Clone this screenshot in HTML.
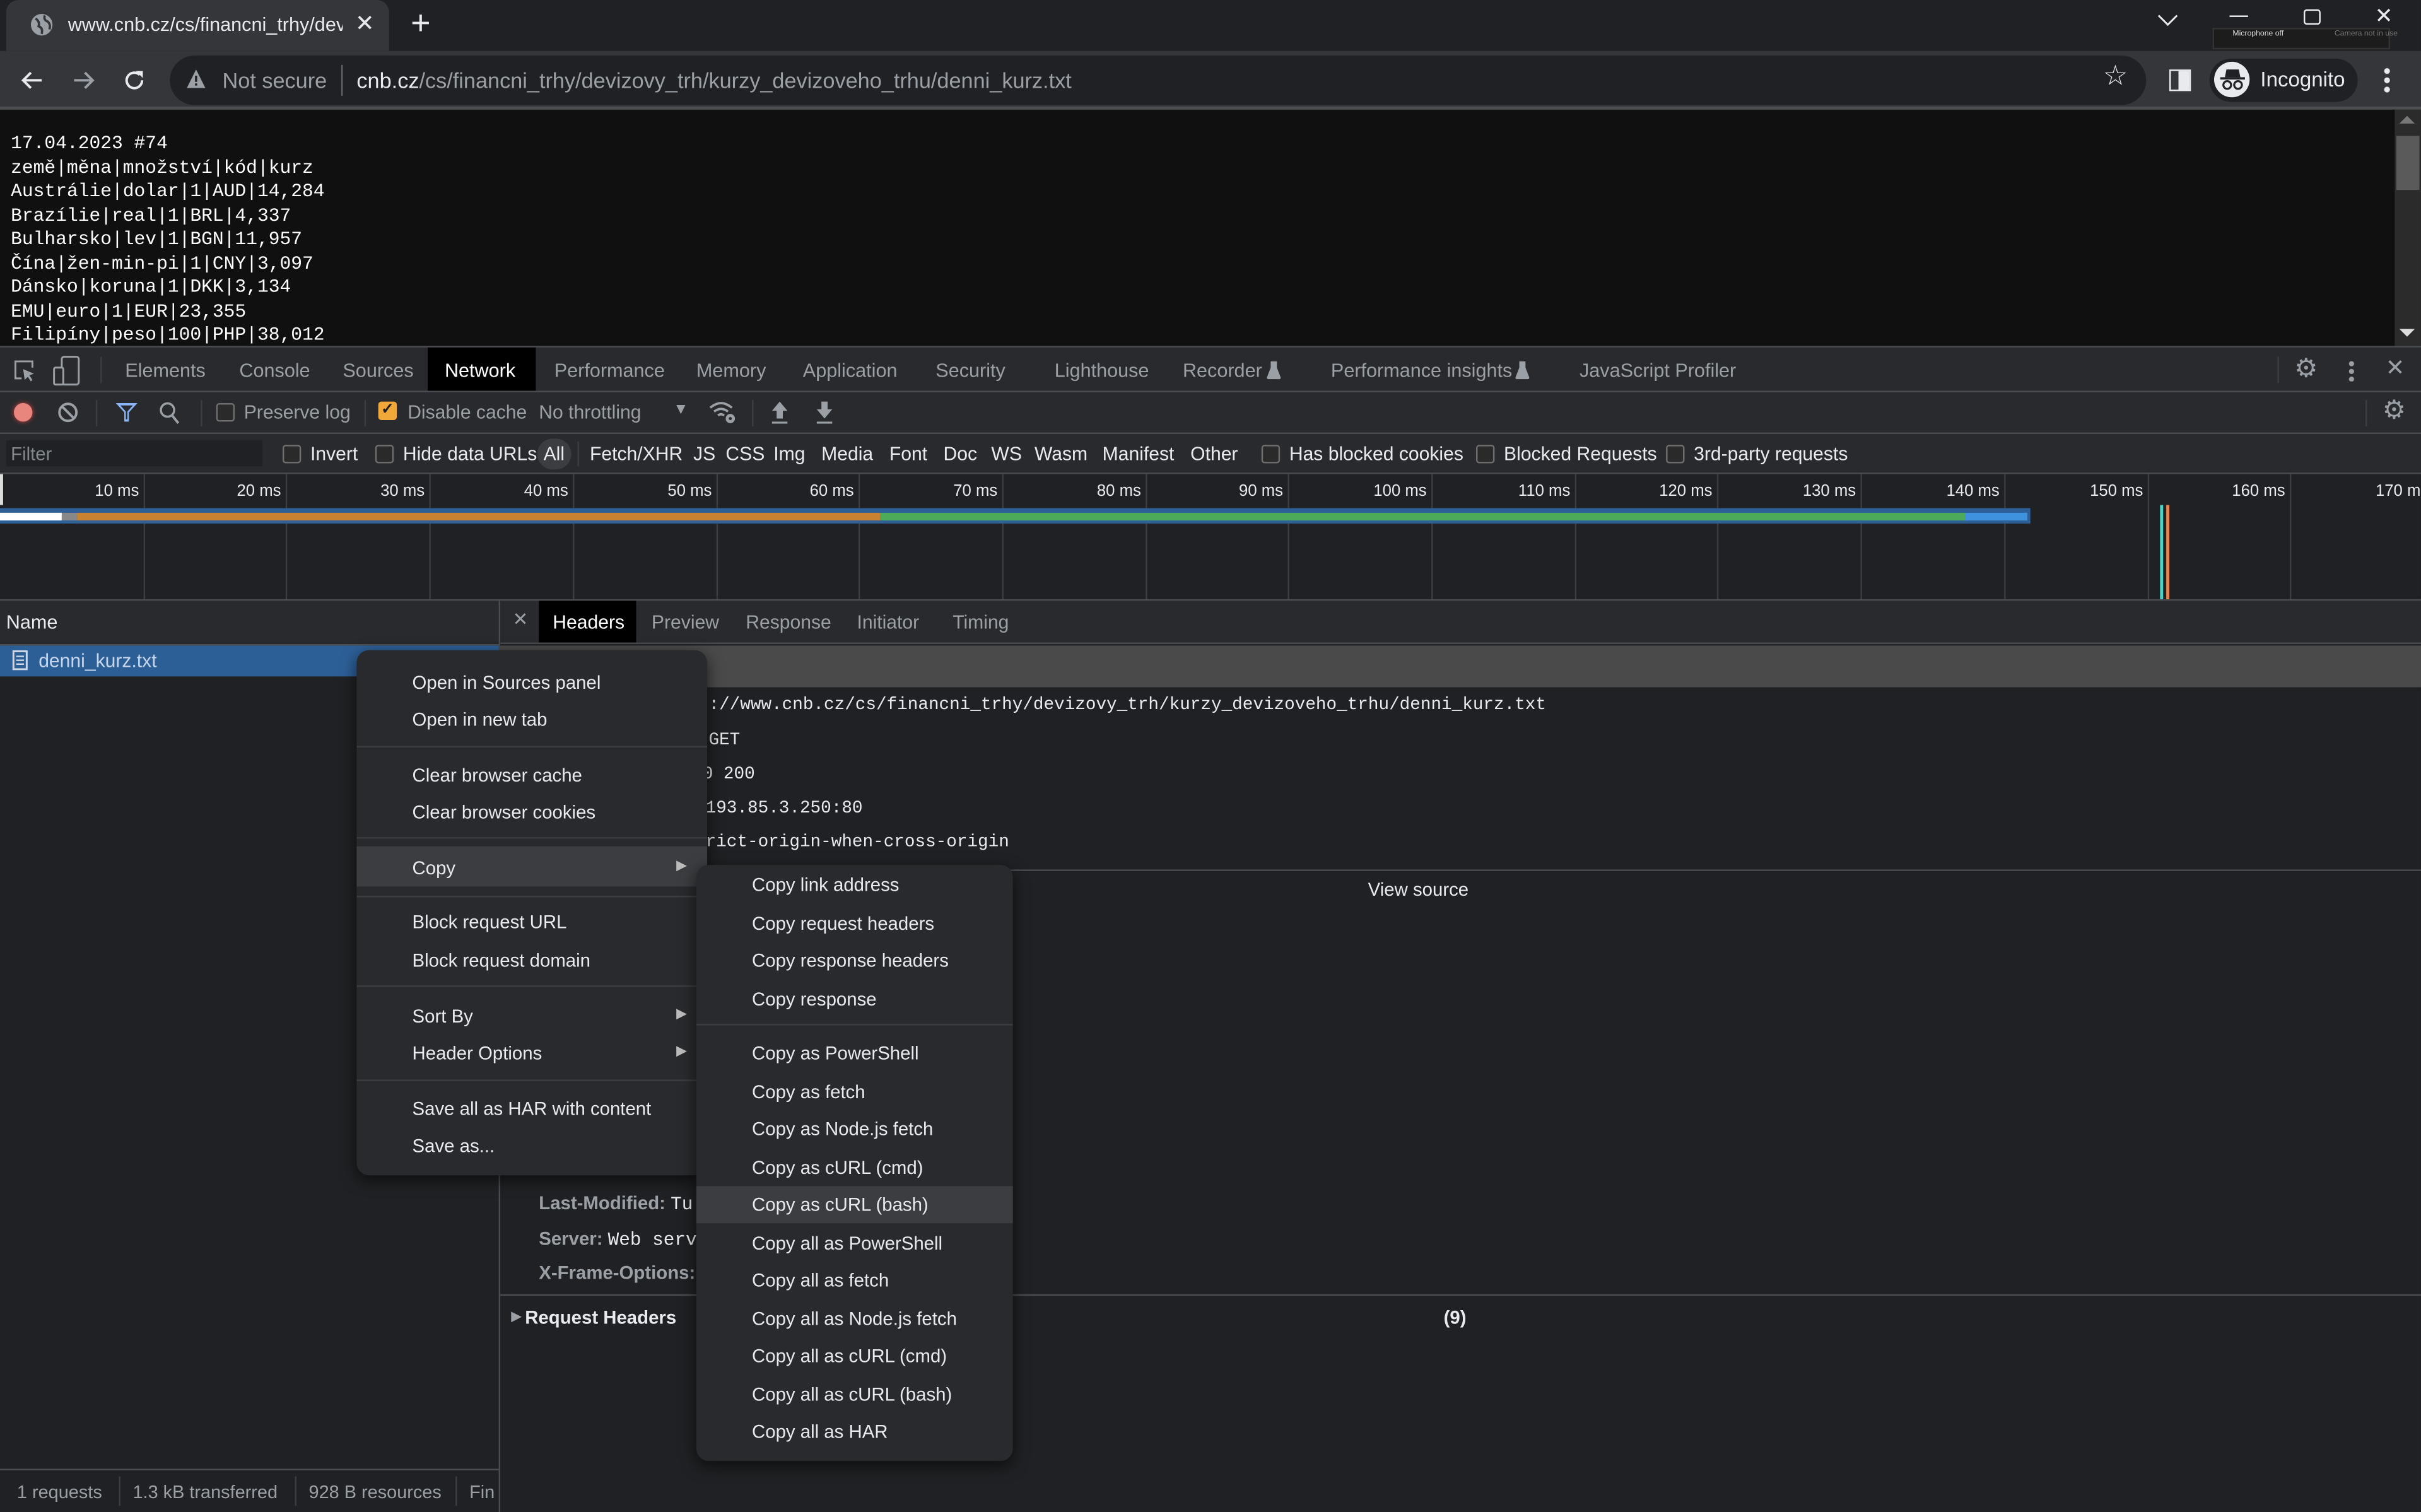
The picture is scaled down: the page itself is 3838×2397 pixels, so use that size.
<!DOCTYPE html>
<html><head><meta charset="utf-8">
<style>
html,body{margin:0;padding:0;background:#202124;overflow:hidden}
#root{position:absolute;left:0;top:0;width:1568px;height:979px;transform:scale(2.4477,2.4484);transform-origin:0 0;background:#202124;font-family:"Liberation Sans",sans-serif;font-size:12px;color:#e8eaed;overflow:hidden}
.a{position:absolute;white-space:nowrap}
.mono{font-family:"Liberation Mono",monospace}
.g{color:#9aa0a6}
.vl{position:absolute;width:1px;background:#3c3d41}
.cb{position:absolute;width:10px;height:10px;border:1px solid #6e6e6e;border-radius:2px;background:#2a2a2a}
.tab{position:absolute;top:233px;color:#9aa0a6;font-size:12.5px}
.mi{position:absolute;left:36px;font-size:12px;color:#e8eaed}
.si{position:absolute;left:36px;font-size:12px;color:#e8eaed}
.sep{position:absolute;left:0;right:0;height:1px;background:#3c3d41}
.ft{position:absolute;top:287px;font-size:12.3px}
</style></head><body><div id="root">
<!-- tab strip -->
<div class="a" style="left:0;top:0;width:1568px;height:33px;background:#202124"></div>
<div class="a" style="left:4px;top:0;width:248px;height:33px;background:#35363a;border-radius:8px 8px 0 0"></div>
<svg class="a" style="left:19px;top:8px" width="16" height="16" viewBox="0 0 16 16"><circle cx="8" cy="8" r="7" fill="#9aa0a6"/><path d="M4 4 Q7 6 6 9 Q9 10 8 14 M10 2 Q9 5 12 6 Q14 8 13 11" stroke="#35363a" stroke-width="1.5" fill="none"/></svg>
<div class="a" style="left:44px;top:9px;font-size:12.5px;width:178px;overflow:hidden">www.cnb.cz/cs/financni_trhy/devizovy</div>
<div class="a" style="left:230px;top:6px;font-size:15px">✕</div>
<div class="a" style="left:266px;top:2px;font-size:22px;font-weight:300">+</div>
<svg class="a" style="left:1397px;top:8px" width="14" height="10"><path d="M1 2 L7 8 L13 2" stroke="#e8eaed" fill="none" stroke-width="1.2"/></svg>
<div class="a" style="left:1444px;top:10px;width:12px;height:1px;background:#e8eaed"></div>
<div class="a" style="left:1492px;top:6px;width:9px;height:8px;border:1px solid #e8eaed;border-radius:2px"></div>
<div class="a" style="left:1538px;top:2px;font-size:14px">✕</div>
<div class="a" style="left:1433px;top:18px;width:113px;height:12px;background:#1c1c1c;border:1px solid #333"></div>
<div class="a" style="left:1446px;top:19px;font-size:5px;color:#ddd">Microphone off</div>
<div class="a" style="left:1512px;top:19px;font-size:5px;color:#777">Camera not in use</div>
<!-- toolbar -->
<div class="a" style="left:0;top:33px;width:1568px;height:37px;background:#35363a"></div>
<div class="a" style="left:0;top:69px;width:1568px;height:2px;background:#4d4e52"></div>
<svg class="a" style="left:12px;top:43px" width="18" height="18" viewBox="0 0 18 18"><path d="M15 9 H3 M8 4 L3 9 L8 14" stroke="#e8eaed" stroke-width="1.6" fill="none"/></svg>
<svg class="a" style="left:45px;top:43px" width="18" height="18" viewBox="0 0 18 18"><path d="M3 9 H15 M10 4 L15 9 L10 14" stroke="#9aa0a6" stroke-width="1.6" fill="none"/></svg>
<svg class="a" style="left:78px;top:43px" width="18" height="18" viewBox="0 0 18 18"><path d="M14 9 A5 5 0 1 1 12.5 5.5" stroke="#e8eaed" stroke-width="1.6" fill="none"/><path d="M10 3 H14.5 V7.5 Z" fill="#e8eaed"/></svg>
<div class="a" style="left:110px;top:36px;width:1280px;height:32px;background:#202124;border-radius:16px"></div>
<svg class="a" style="left:120px;top:44px" width="14" height="14" viewBox="0 0 14 14"><path d="M7 1 L13 13 H1 Z" fill="#9aa0a6"/><rect x="6.3" y="5" width="1.4" height="4" fill="#202124"/><rect x="6.3" y="10" width="1.4" height="1.4" fill="#202124"/></svg>
<div class="a g" style="left:144px;top:44px;font-size:14px">Not secure</div>
<div class="a" style="left:221px;top:42px;width:1px;height:20px;background:#5f6368"></div>
<div class="a" style="left:231px;top:44px;font-size:14px"><span style="color:#e8eaed">cnb.cz</span><span class="g">/cs/financni_trhy/devizovy_trh/kurzy_devizoveho_trhu/denni_kurz.txt</span></div>
<div class="a" style="left:1362px;top:39px;font-size:18px;color:#e8eaed">☆</div>
<div class="a" style="left:1405px;top:45px;width:12px;height:12px;border:1px solid #e8eaed;background:linear-gradient(90deg,#35363a 0 5px,#e8eaed 5px)"></div>
<div class="a" style="left:1431px;top:38px;width:96px;height:28px;background:#202124;border-radius:14px"></div>
<div class="a" style="left:1434px;top:40px;width:23px;height:23px;background:#e8eaed;border-radius:50%"></div>
<svg class="a" style="left:1436px;top:43px" width="20" height="17" viewBox="0 0 20 17"><path d="M6 2 H14 L15 7 H5 Z" fill="#202124"/><rect x="2" y="7" width="16" height="1.5" fill="#202124"/><circle cx="6.5" cy="12" r="2.5" stroke="#202124" fill="none" stroke-width="1.3"/><circle cx="13.5" cy="12" r="2.5" stroke="#202124" fill="none" stroke-width="1.3"/></svg>
<div class="a" style="left:1464px;top:44px;font-size:13.5px">Incognito</div>
<div class="a" style="left:1544px;top:43px;width:4px;height:18px;background:radial-gradient(circle,#e8eaed 1.7px,transparent 2px) 0 0/4px 6px"></div>
<!-- page content -->
<div class="a" style="left:0;top:71px;width:1551px;height:153px;background:#101010"></div>
<div class="a mono" style="left:7px;top:86px;font-size:12.1px;line-height:15.5px;color:#fff;white-space:pre">17.04.2023 #74
země|měna|množství|kód|kurz
Austrálie|dolar|1|AUD|14,284
Brazílie|real|1|BRL|4,337
Bulharsko|lev|1|BGN|11,957
Čína|žen-min-pi|1|CNY|3,097
Dánsko|koruna|1|DKK|3,134
EMU|euro|1|EUR|23,355
Filipíny|peso|100|PHP|38,012</div>
<div class="a" style="left:1551px;top:71px;width:17px;height:153px;background:#2b2b2b"></div>
<div class="a" style="left:1552px;top:88px;width:15px;height:35px;background:#5a5a5a"></div>
<div class="a" style="left:1554px;top:75px;width:0;height:0;border:5px solid transparent;border-bottom:5px solid #777;border-top:0"></div>
<div class="a" style="left:1554px;top:213px;width:0;height:0;border:5px solid transparent;border-top:5px solid #ddd;border-bottom:0"></div>
<div class="a" style="left:0;top:224px;width:1568px;height:1px;background:#494c50"></div>
<!-- devtools tabs -->
<div class="a" style="left:0;top:225px;width:1568px;height:28px;background:#292a2d"></div>
<div class="a" style="left:0;top:253px;width:1568px;height:1px;background:#494c50"></div>
<svg class="a" style="left:8px;top:232px" width="16" height="16" viewBox="0 0 16 16"><path d="M6 13 H2 V2 H13 V6" stroke="#9aa0a6" fill="none" stroke-width="1.2"/><path d="M7 7 L14 10 L11 11 L13 14 L12 15 L10 12 L8 14 Z" fill="#9aa0a6"/></svg>
<svg class="a" style="left:34px;top:230px" width="18" height="20" viewBox="0 0 18 20"><rect x="6" y="1" width="11" height="18" rx="1.5" stroke="#9aa0a6" fill="none" stroke-width="1.2"/><rect x="1" y="8" width="6" height="11" rx="1" stroke="#9aa0a6" fill="#292a2d" stroke-width="1.2"/></svg>
<div class="vl" style="left:65px;top:231px;height:17px"></div>
<div class="tab" style="left:81px">Elements</div>
<div class="tab" style="left:155px">Console</div>
<div class="tab" style="left:222px">Sources</div>
<div class="a" style="left:277px;top:225px;width:70px;height:28px;background:#000"></div>
<div class="tab" style="left:288px;color:#fff">Network</div>
<div class="tab" style="left:359px">Performance</div>
<div class="tab" style="left:451px">Memory</div>
<div class="tab" style="left:520px">Application</div>
<div class="tab" style="left:606px">Security</div>
<div class="tab" style="left:683px">Lighthouse</div>
<div class="tab" style="left:766px">Recorder</div>
<svg class="a" style="left:820px;top:233px" width="10" height="13" viewBox="0 0 10 13"><path d="M3 1 H7 V5 L9.5 11.5 Q9.5 12.5 8.5 12.5 H1.5 Q0.5 12.5 0.5 11.5 L3 5 Z" fill="#9aa0a6"/></svg>
<div class="tab" style="left:862px">Performance insights</div>
<svg class="a" style="left:981px;top:233px" width="10" height="13" viewBox="0 0 10 13"><path d="M3 1 H7 V5 L9.5 11.5 Q9.5 12.5 8.5 12.5 H1.5 Q0.5 12.5 0.5 11.5 L3 5 Z" fill="#9aa0a6"/></svg>
<div class="tab" style="left:1023px">JavaScript Profiler</div>
<div class="vl" style="left:1475px;top:231px;height:17px"></div>
<div class="a" style="left:1486px;top:229px;font-size:17px;color:#9aa0a6">⚙</div>
<div class="a" style="left:1521px;top:233px;width:4px;height:14px;background:radial-gradient(circle,#9aa0a6 1.5px,transparent 1.8px) 0 0/4px 5px"></div>
<div class="a" style="left:1545px;top:229px;font-size:15px;color:#9aa0a6">✕</div>
<!-- network toolbar -->
<div class="a" style="left:0;top:254px;width:1568px;height:26px;background:#292a2d"></div>
<div class="a" style="left:0;top:280px;width:1568px;height:1px;background:#494c50"></div>
<div class="a" style="left:9px;top:261px;width:12px;height:12px;border-radius:50%;background:#e8867e;box-shadow:0 0 3px #c44"></div>
<svg class="a" style="left:37px;top:260px" width="14" height="14" viewBox="0 0 14 14"><circle cx="7" cy="7" r="5.5" stroke="#9aa0a6" stroke-width="1.6" fill="none"/><path d="M3 3 L11 11" stroke="#9aa0a6" stroke-width="1.6"/></svg>
<div class="vl" style="left:62px;top:259px;height:17px"></div>
<svg class="a" style="left:74px;top:260px" width="16" height="14" viewBox="0 0 16 14"><path d="M1 1 H15 L9.5 7 V13 H6.5 V7 Z" fill="#8ab4f8"/><path d="M4 2.5 H12 L8.5 6.5 V11.5 H7.5 V6.5 Z" fill="#292a2d"/></svg>
<svg class="a" style="left:103px;top:260px" width="14" height="15" viewBox="0 0 14 15"><circle cx="5.5" cy="5.5" r="4.3" stroke="#9aa0a6" stroke-width="1.4" fill="none"/><path d="M8.5 9 L12.5 14" stroke="#9aa0a6" stroke-width="1.6"/></svg>
<div class="vl" style="left:130px;top:259px;height:17px"></div>
<div class="cb" style="left:140px;top:261px"></div>
<div class="a g" style="left:158px;top:260px;font-size:12.3px">Preserve log</div>
<div class="vl" style="left:236px;top:259px;height:17px"></div>
<div class="a" style="left:245px;top:260px;width:12px;height:12px;border-radius:2px;background:#f0a83a;color:#222;font-size:10px;line-height:12px;text-align:center;font-weight:bold">✓</div>
<div class="a g" style="left:264px;top:260px;font-size:12.3px">Disable cache</div>
<div class="a g" style="left:349px;top:260px;font-size:12.3px">No throttling</div>
<div class="a g" style="left:436px;top:260px;font-size:10px">▼</div>
<svg class="a" style="left:458px;top:258px" width="20" height="17" viewBox="0 0 20 17"><path d="M2 6 Q9 0 16 6 M4.5 8.5 Q9 5 13.5 8.5 M7 11 Q9 9.5 11 11" stroke="#9aa0a6" stroke-width="1.5" fill="none"/><circle cx="15" cy="13" r="3" fill="#9aa0a6"/><circle cx="15" cy="13" r="1" fill="#292a2d"/></svg>
<div class="vl" style="left:487px;top:259px;height:17px"></div>
<svg class="a" style="left:498px;top:259px" width="14" height="16" viewBox="0 0 14 16"><path d="M7 1 L12 7 H9 V12 H5 V7 H2 Z" fill="#9aa0a6"/><rect x="2" y="14" width="10" height="1.3" fill="#9aa0a6"/></svg>
<svg class="a" style="left:527px;top:259px" width="14" height="16" viewBox="0 0 14 16"><path d="M7 12 L12 6 H9 V1 H5 V6 H2 Z" fill="#9aa0a6"/><rect x="2" y="14" width="10" height="1.3" fill="#9aa0a6"/></svg>
<div class="vl" style="left:1532px;top:259px;height:17px"></div>
<div class="a" style="left:1543px;top:256px;font-size:17px;color:#9aa0a6">⚙</div>
<!-- filter row -->
<div class="a" style="left:0;top:281px;width:1568px;height:25px;background:#292a2d"></div>
<div class="a" style="left:0;top:306px;width:1568px;height:1px;background:#494c50"></div>
<div class="a" style="left:4px;top:285px;width:166px;height:17px;background:#202124"></div>
<div class="a" style="left:7px;top:287px;font-size:12px;color:#80868b">Filter</div>
<div class="cb" style="left:183px;top:288px"></div>
<div class="ft" style="left:201px">Invert</div>
<div class="cb" style="left:243px;top:288px"></div>
<div class="ft" style="left:261px">Hide data URLs</div>
<div class="a" style="left:348px;top:284px;width:22px;height:20px;background:#3c3d40;border-radius:10px"></div>
<div class="ft" style="left:352px">All</div>
<div class="vl" style="left:374px;top:286px;height:16px"></div>
<div class="ft" style="left:382px">Fetch/XHR</div>
<div class="ft" style="left:449px">JS</div>
<div class="ft" style="left:470px">CSS</div>
<div class="ft" style="left:501px">Img</div>
<div class="ft" style="left:532px">Media</div>
<div class="ft" style="left:576px">Font</div>
<div class="ft" style="left:611px">Doc</div>
<div class="ft" style="left:642px">WS</div>
<div class="ft" style="left:670px">Wasm</div>
<div class="ft" style="left:714px">Manifest</div>
<div class="ft" style="left:771px">Other</div>
<div class="cb" style="left:817px;top:288px"></div>
<div class="ft" style="left:835px">Has blocked cookies</div>
<div class="cb" style="left:956px;top:288px"></div>
<div class="ft" style="left:974px">Blocked Requests</div>
<div class="cb" style="left:1079px;top:288px"></div>
<div class="ft" style="left:1097px">3rd-party requests</div>
<!-- timeline -->
<div class="a" style="left:0;top:307px;width:1568px;height:81px;background:#202124"></div>
<div class="a" style="left:0;top:388px;width:1568px;height:1px;background:#494c50"></div>
<div class="a" style="left:0;top:307px;width:2px;height:20px;background:#ddd"></div>
<div id="grid"></div>
<div class="a" style="left:0;top:329px;width:1315px;height:10px;background:#2e5f97"></div>
<div class="a" style="left:0;top:332px;width:40px;height:5px;background:#fff"></div>
<div class="a" style="left:40px;top:332px;width:10px;height:5px;background:#888"></div>
<div class="a" style="left:50px;top:332px;width:520px;height:5px;background:#c98230"></div>
<div class="a" style="left:570px;top:332px;width:703px;height:5px;background:#4caa5a"></div>
<div class="a" style="left:1273px;top:332px;width:40px;height:5px;background:#3f93de"></div>
<div class="a" style="left:1399px;top:327px;width:1.5px;height:61px;background:#4fd1c5"></div>
<div class="a" style="left:1403px;top:327px;width:1.5px;height:61px;background:#e8834f"></div>
<!-- left panel -->
<div class="a" style="left:0;top:389px;width:323px;height:28px;background:#292a2d"></div>
<div class="a" style="left:0;top:417px;width:323px;height:1px;background:#494c50"></div>
<div class="a" style="left:4px;top:396px;font-size:12.5px">Name</div>
<div class="a" style="left:0;top:418px;width:323px;height:20px;background:#2d5f97"></div>
<svg class="a" style="left:8px;top:421px" width="10" height="13" viewBox="0 0 10 13"><rect x="0.7" y="0.7" width="8.6" height="11.6" stroke="#cfd8e6" fill="none" stroke-width="1.2"/><path d="M2.5 4 H7.5 M2.5 6.5 H7.5 M2.5 9 H7.5" stroke="#cfd8e6" stroke-width="1"/></svg>
<div class="a" style="left:25px;top:421px;font-size:12.3px;color:#c6d6ec">denni_kurz.txt</div>
<div class="a" style="left:323px;top:389px;width:1px;height:590px;background:#494c50"></div>
<div class="a" style="left:0;top:951px;width:323px;height:1px;background:#494c50"></div>
<div class="a g" style="left:11px;top:959px;font-size:11.8px">1 requests</div>
<div class="vl" style="left:77px;top:956px;height:19px"></div>
<div class="a g" style="left:86px;top:959px;font-size:11.8px">1.3 kB transferred</div>
<div class="vl" style="left:191px;top:956px;height:19px"></div>
<div class="a g" style="left:200px;top:959px;font-size:11.8px">928 B resources</div>
<div class="vl" style="left:295px;top:956px;height:19px"></div>
<div class="a g" style="left:304px;top:959px;font-size:11.8px">Fin</div>
<!-- right panel -->
<div class="a" style="left:324px;top:389px;width:1244px;height:27px;background:#292a2d"></div>
<div class="a" style="left:324px;top:416px;width:1244px;height:1px;background:#494c50"></div>
<div class="a g" style="left:332px;top:394px;font-size:12px">✕</div>
<div class="a" style="left:349px;top:389px;width:63px;height:27px;background:#000"></div>
<div class="a" style="left:358px;top:396px;font-size:12.3px;color:#fff">Headers</div>
<div class="a g" style="left:422px;top:396px;font-size:12.3px">Preview</div>
<div class="a g" style="left:483px;top:396px;font-size:12.3px">Response</div>
<div class="a g" style="left:555px;top:396px;font-size:12.3px">Initiator</div>
<div class="a g" style="left:617px;top:396px;font-size:12.3px">Timing</div>
<div class="a" style="left:324px;top:418px;width:1244px;height:27px;background:#4a4a4a"></div>
<div class="a mono" style="left:459px;top:451px;font-size:11.3px">://www.cnb.cz/cs/financni_trhy/devizovy_trh/kurzy_devizoveho_trhu/denni_kurz.txt</div>
<div class="a mono" style="left:459px;top:474px;font-size:11.3px">GET</div>
<div class="a mono" style="left:455px;top:496px;font-size:11.3px">0 200</div>
<div class="a mono" style="left:457px;top:518px;font-size:11.3px">193.85.3.250:80</div>
<div class="a mono" style="left:457px;top:540px;font-size:11.3px">rict-origin-when-cross-origin</div>
<div class="a" style="left:324px;top:563px;width:1244px;height:1px;background:#494c50"></div>
<div class="a" style="left:886px;top:569px;font-size:12px">View source</div>
<div class="a" style="left:349px;top:772px;font-size:12px;font-weight:bold;color:#9aa0a6">Last-Modified: <span class="mono" style="font-weight:normal;color:#e8eaed">Tu</span></div>
<div class="a" style="left:349px;top:795px;font-size:12px;font-weight:bold;color:#9aa0a6">Server: <span class="mono" style="font-weight:normal;color:#e8eaed">Web serv</span></div>
<div class="a" style="left:349px;top:817px;font-size:12px;font-weight:bold;color:#9aa0a6">X-Frame-Options:</div>
<div class="a" style="left:324px;top:838px;width:1244px;height:1px;background:#494c50"></div>
<div class="a" style="left:331px;top:847px;font-size:9px;color:#9aa0a6">▶</div>
<div class="a" style="left:340px;top:846px;font-size:12px;font-weight:bold">Request Headers</div>
<div class="a" style="left:935px;top:846px;font-size:12px;font-weight:bold">(9)</div>
<!-- context menu -->
<div class="a" style="left:231px;top:421px;width:227px;height:340px;background:#292a2d;border-radius:8px;box-shadow:0 3px 10px rgba(0,0,0,.6)">
<div class="mi" style="top:14px">Open in Sources panel</div>
<div class="mi" style="top:38px">Open in new tab</div>
<div class="sep" style="top:62px"></div>
<div class="mi" style="top:74px">Clear browser cache</div>
<div class="mi" style="top:98px">Clear browser cookies</div>
<div class="sep" style="top:121px"></div>
<div class="a" style="left:0;top:127px;width:227px;height:26px;background:#3c3d40"></div>
<div class="mi" style="top:134px">Copy</div>
<div class="a" style="left:207px;top:134px;font-size:9px;color:#bbb">▶</div>
<div class="sep" style="top:159px"></div>
<div class="mi" style="top:169px">Block request URL</div>
<div class="mi" style="top:194px">Block request domain</div>
<div class="sep" style="top:217px"></div>
<div class="mi" style="top:230px">Sort By</div>
<div class="a" style="left:207px;top:230px;font-size:9px;color:#bbb">▶</div>
<div class="mi" style="top:254px">Header Options</div>
<div class="a" style="left:207px;top:254px;font-size:9px;color:#bbb">▶</div>
<div class="sep" style="top:278px"></div>
<div class="mi" style="top:290px">Save all as HAR with content</div>
<div class="mi" style="top:314px">Save as...</div>
</div>
<!-- submenu -->
<div class="a" style="left:451px;top:560px;width:205px;height:386px;background:#292a2d;border-radius:8px;box-shadow:0 3px 10px rgba(0,0,0,.6)">
<div class="si" style="top:6px">Copy link address</div>
<div class="si" style="top:31px">Copy request headers</div>
<div class="si" style="top:55px">Copy response headers</div>
<div class="si" style="top:80px">Copy response</div>
<div class="sep" style="top:103px"></div>
<div class="si" style="top:115px">Copy as PowerShell</div>
<div class="si" style="top:140px">Copy as fetch</div>
<div class="si" style="top:164px">Copy as Node.js fetch</div>
<div class="si" style="top:189px">Copy as cURL (cmd)</div>
<div class="a" style="left:0;top:208px;width:205px;height:24px;background:#3c3d40"></div>
<div class="si" style="top:213px">Copy as cURL (bash)</div>
<div class="si" style="top:238px">Copy all as PowerShell</div>
<div class="si" style="top:262px">Copy all as fetch</div>
<div class="si" style="top:287px">Copy all as Node.js fetch</div>
<div class="si" style="top:311px">Copy all as cURL (cmd)</div>
<div class="si" style="top:336px">Copy all as cURL (bash)</div>
<div class="si" style="top:360px">Copy all as HAR</div>
</div>
</div>
<script>
var g=document.getElementById('grid'),h='';
for(var i=1;i<=17;i++){var x=Math.round(i*92.7);h+='<div class="vl" style="left:'+x+'px;top:307px;height:81px"></div><div class="a" style="left:'+(x-60)+'px;width:57px;text-align:right;top:312px;font-size:10.5px;color:#e8eaed">'+(i*10)+' ms</div>';}
g.innerHTML=h;
</script>
</body></html>
